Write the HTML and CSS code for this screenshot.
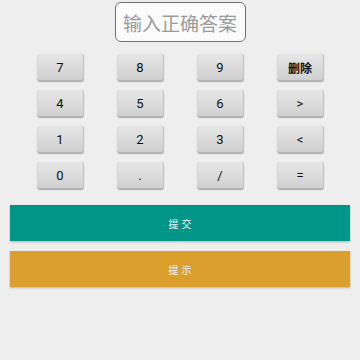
FILE: index.html
```html
<!DOCTYPE html>
<html lang="zh">
<head>
    <meta charset="UTF-8">
    <meta name="viewport" content="width=device-width, initial-scale=1.0">
    <link rel="stylesheet" href="styles.css">
    <title>答题</title>
</head>
<body>
    <div class="answer">
        <div class="screen" id="screen">输入正确答案</div>
    </div>
    <div class="keys">
        <button>7</button>
        <button>8</button>
        <button>9</button>
        <button class="del">删除</button>
        <button>4</button>
        <button>5</button>
        <button>6</button>
        <button>&gt;</button>
        <button>1</button>
        <button>2</button>
        <button>3</button>
        <button>&lt;</button>
        <button>0</button>
        <button>.</button>
        <button>/</button>
        <button>=</button>
    </div>
    <div class="actions">
        <div class="bar submit">提交</div>
        <div class="bar hint">提示</div>
    </div>
</body>
</html>
```

FILE: styles.css
```css
body {
    font-family: Roboto, "Noto Sans CJK SC", sans-serif;
    background-color: #eeeeee;
    margin: 0;
    width: 360px;
    height: 360px;
}

.answer {
    display: flex;
    justify-content: center;
    padding-top: 2px;
}

.screen {
    width: 129px;
    height: 38px;
    border: 1px solid #707070;
    border-radius: 6px;
    background-color: #fbfbfb;
    color: #9a9a9a;
    font-size: 19px;
    display: flex;
    align-items: center;
    justify-content: center;
}

.keys {
    display: grid;
    grid-template-columns: repeat(4, 80px);
    row-gap: 9px;
    padding: 0 20px;
    margin-top: 12px;
    justify-items: center;
}

.keys button {
    width: 47px;
    height: 27px;
    border: none;
    border-radius: 3px;
    background: linear-gradient(#e6e6e6, #cfcfcf);
    box-shadow: inset 0 -1px 0 #b4b4b4, inset 1px 0 0 #d8d8d8, inset -1px 0 0 #c0c0c0, 0 1px 1px #a8a8a8;
    font-family: Roboto, "Noto Sans CJK SC", sans-serif;
    font-size: 13px;
    color: #111;
    padding: 0;
}

.keys button.del {
    font-size: 12px;
    font-weight: bold;
}

.actions {
    display: flex;
    flex-direction: column;
    gap: 10px;
    padding: 0 10px;
    margin-top: 16px;
}

.bar {
    height: 36px;
    display: flex;
    align-items: center;
    justify-content: center;
    color: #f4f4f4;
    font-size: 10px;
    letter-spacing: 3px;
    text-indent: 3px;
    box-shadow: 0 1px 2px rgba(0, 0, 0, 0.25);
}

.submit {
    background-color: #009587;
}

.hint {
    background-color: #da9f2c;
}
```
